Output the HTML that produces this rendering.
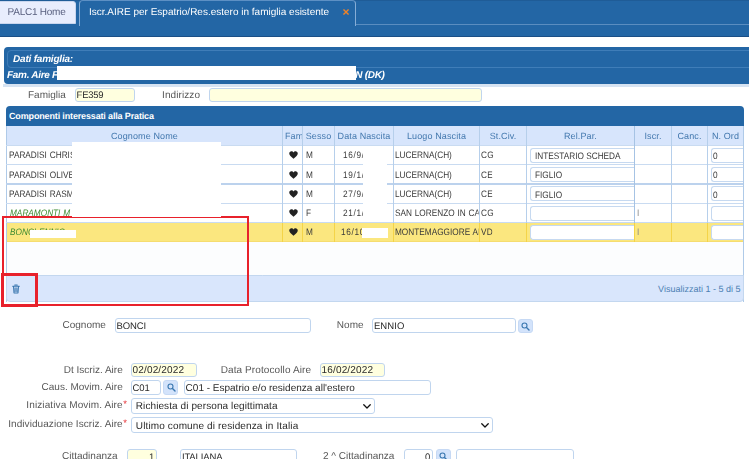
<!DOCTYPE html>
<html lang="it">
<head>
<meta charset="utf-8">
<title>Iscr.AIRE per Espatrio/Res.estero in famiglia esistente</title>
<style>
*{box-sizing:border-box;margin:0;padding:0}
html,body{width:749px;height:459px;overflow:hidden;background:#fff}
body{position:relative;font-family:"Liberation Sans",sans-serif;font-size:10px;color:#333;line-height:1;text-rendering:geometricPrecision}
.a{position:absolute;white-space:nowrap}
.blue{background:#2366a5}
.t{position:absolute;white-space:nowrap;line-height:12px;height:12px}
.lbl{color:#575757;font-size:10px}
.inp{position:absolute;border:1px solid #c0d5ee;border-radius:3px;background:#fff;font-size:9.5px;color:#2a2a2a;line-height:15.5px;padding-left:0.6px;overflow:hidden;white-space:nowrap}
.y{background:#ffffdf}
.btn{position:absolute;background:#d3e3fb;border:1px solid #c6d9f4;border-radius:3px}
.vl{position:absolute;width:1px;background:#b6cfeb;top:126px;height:116px}
.hl{position:absolute;height:1px;background:#c9dbf1;left:6px;width:737px}
.cell{position:absolute;white-space:nowrap;font-size:9.4px;letter-spacing:0;word-spacing:0.6px;color:#3a3a3a;line-height:12px;overflow:hidden;transform:scaleX(0.88);transform-origin:0 0}
.ri{position:absolute;left:4px;top:0;white-space:nowrap;font-size:9.4px;color:#3a3a3a;line-height:12px;transform:scaleX(0.88);transform-origin:0 0}
.hd{position:absolute;white-space:nowrap;font-size:9px;letter-spacing:0.12px;color:#4378ae;line-height:12px;text-align:center;overflow:hidden}
.grn{color:#3f8c32;font-style:italic}
.w{position:absolute;background:#fff}
.ast{position:absolute;color:#e62e33;font-size:9.5px;line-height:12px}
svg{position:absolute;overflow:visible}
</style>
</head>
<body>
<div id="page" style="position:absolute;left:0;top:0;width:749px;height:459px;filter:blur(0.5px)">
<div class="a blue" style="left:-10px;top:-10px;width:779px;height:47px"></div>
<div class="a" style="left:-10px;top:-10px;width:779px;height:11px;background:#1f5c97"></div>
<div class="a" style="left:355px;top:24px;width:410px;height:1px;background:#5a8dc0"></div>
<div class="a" style="left:-12px;top:1px;width:88px;height:23px;background:#e8edfd;border:1px solid #c9d6ee;border-radius:3px 3px 0 0"></div>
<div class="t" id="tab1" style="left:7.6px;top:7px;font-size:10px;letter-spacing:-0.25px;color:#5a6180">PALC1 Home</div>
<div class="a" style="left:78.5px;top:0px;width:277px;height:25.5px;background:#2366a5;border:1px solid #86add6;border-top-color:#5d90c4;border-bottom:none;border-radius:4px 4px 0 0"></div>
<div class="t" id="tab2" style="left:89px;top:7px;font-size:10px;color:#fff">Iscr.AIRE per Espatrio/Res.estero in famiglia esistente</div>
<div class="t" id="tabx" style="left:342.4px;top:6px;font-size:12px;font-weight:bold;color:#f08326">×</div>
<div class="a" style="left:-10px;top:36px;width:779px;height:1.3px;background:#1b4f86"></div>
<div class="a blue" style="left:4px;top:47px;width:760px;height:37px;border-radius:4px 0 0 4px"></div>
<div class="a" style="left:7px;top:50px;width:760px;height:18px;border:1px solid #3f7db8;border-radius:4px"></div>
<div class="t" id="dati" style="left:13px;top:53.5px;font-size:10px;letter-spacing:-0.2px;font-weight:bold;font-style:italic;color:#fff">Dati famiglia:</div>
<div class="t" id="fam" style="left:7px;top:70px;font-size:10px;letter-spacing:-0.3px;font-weight:bold;font-style:italic;color:#fff">Fam. Aire F</div>
<div class="t" id="dk" style="left:355.3px;top:70px;font-size:10px;letter-spacing:-0.3px;font-weight:bold;font-style:italic;color:#fff">N (DK)</div>
<div class="w" style="left:57px;top:66px;width:299px;height:14px"></div>
<div class="a" style="left:3px;top:84.3px;width:760px;height:2.4px;background:#d6e3f2"></div>
<div class="t lbl" id="lfam" style="left:28px;top:89.5px">Famiglia</div>
<div class="inp y" id="ifam" style="left:75px;top:87.6px;width:60px;height:14.3px;letter-spacing:-0.26px;line-height:14.5px">FE359</div>
<div class="t lbl" id="lind" style="left:162px;top:89.5px;letter-spacing:0.1px">Indirizzo</div>
<div class="inp y" style="left:209px;top:87.6px;width:273px;height:14.3px"></div>
<div class="a blue" style="left:6px;top:106px;width:737.5px;height:21px;border-radius:4px 4px 0 0"></div>
<div class="t" id="comp" style="left:9px;top:110px;font-size:9px;letter-spacing:-0.15px;font-weight:bold;color:#fff">Componenti interessati alla Pratica</div>
<div class="a" style="left:6px;top:126px;width:737.5px;height:20px;background:#d7e5fc"></div>
<div class="a" style="left:6px;top:126px;width:1px;height:176px;background:#afcae8"></div>
<div class="a" style="left:742.5px;top:126px;width:1px;height:176px;background:#afcae8"></div>
<div class="a" style="left:7px;top:222.7px;width:735.5px;height:19.3px;background:#fbe77f;border-bottom:1px solid #f6dd70"></div>
<div class="a" style="left:7px;top:242px;width:735.5px;height:34px;background:#fcfdfe"></div>
<div class="hl" style="top:145px;"></div>
<div class="hl" style="top:164px;"></div>
<div class="hl" style="top:183.3px;height:1.3px;background:#bcd2ed"></div>
<div class="hl" style="top:203px;"></div>
<div class="hl" style="top:222px;"></div>
<div class="vl" style="left:282.2px;"></div>
<div class="a" style="left:282.2px;top:223px;width:1px;height:18.5px;background:#f4d448"></div>
<div class="vl" style="left:302.2px;"></div>
<div class="a" style="left:302.2px;top:223px;width:1px;height:18.5px;background:#f4d448"></div>
<div class="vl" style="left:334px;"></div>
<div class="a" style="left:334px;top:223px;width:1px;height:18.5px;background:#f4d448"></div>
<div class="vl" style="left:393px;"></div>
<div class="a" style="left:393px;top:223px;width:1px;height:18.5px;background:#f4d448"></div>
<div class="vl" style="left:478.6px;"></div>
<div class="a" style="left:478.6px;top:223px;width:1px;height:18.5px;background:#f4d448"></div>
<div class="vl" style="left:526px;"></div>
<div class="a" style="left:526px;top:223px;width:1px;height:18.5px;background:#f4d448"></div>
<div class="vl" style="left:634px;width:1.4px;background:#a6c3e4"></div>
<div class="a" style="left:634px;top:223px;width:1px;height:18.5px;background:#f4d448"></div>
<div class="vl" style="left:671px;"></div>
<div class="a" style="left:671px;top:223px;width:1px;height:18.5px;background:#f4d448"></div>
<div class="vl" style="left:707px;"></div>
<div class="a" style="left:707px;top:223px;width:1px;height:18.5px;background:#f4d448"></div>
<div class="hd" id="h1" style="left:7px;top:130px;width:275px;">Cognome Nome</div>
<div class="hd" id="h2" style="left:283px;top:130px;width:19px;text-align:left;padding-left:2px;">Fam</div>
<div class="hd" id="h3" style="left:303px;top:130px;width:31px;">Sesso</div>
<div class="hd" id="h4" style="left:335px;top:130px;width:58px;">Data Nascita</div>
<div class="hd" id="h5" style="left:394px;top:130px;width:85px;">Luogo Nascita</div>
<div class="hd" id="h6" style="left:480px;top:130px;width:46px;">St.Civ.</div>
<div class="hd" id="h7" style="left:527px;top:130px;width:107px;">Rel.Par.</div>
<div class="hd" id="h8" style="left:635px;top:130px;width:36px;">Iscr.</div>
<div class="hd" id="h9" style="left:672px;top:130px;width:35px;">Canc.</div>
<div class="hd" id="h10" style="left:708px;top:130px;width:35px;">N. Ord</div>
<div class="cell" id="n1" style="left:8.6px;top:149px;width:310.682px">PARADISI CHRIS</div>
<svg style="left:289px;top:150.7px" width="9" height="8" viewBox="0 0 18 16"><path d="M9 15.5 C4 11.5 0.5 8.6 0.5 5 C0.5 2.4 2.5 0.5 4.9 0.5 C6.6 0.5 8.2 1.5 9 3 C9.8 1.5 11.4 0.5 13.1 0.5 C15.5 0.5 17.5 2.4 17.5 5 C17.5 8.6 14 11.5 9 15.5 Z" fill="#222"/></svg>
<div class="cell" id="s1" style="left:306px;top:149px">M</div>
<div class="cell" id="d1" style="left:343.3px;top:149px;width:56.4773px;letter-spacing:0.75px">16/9/</div>
<div class="cell" id="l1" style="left:395.3px;top:149px;width:94.6591px">LUCERNA(CH)</div>
<div class="cell" id="c1" style="left:481px;top:149px;letter-spacing:0.2px">CG</div>
<div class="inp" id="r1" style="left:530px;top:148px;width:104px;height:15px;padding:0;border-color:#c6d9f0;border-radius:3px 0 0 3px;border-right:none"><span class="ri" style="top:0.5px">INTESTARIO SCHEDA</span></div>
<div class="inp" id="o1" style="left:711px;top:148px;width:32px;height:15px;padding:0;border-color:#c6d9f0;border-radius:3px 0 0 3px;border-right:none"><span class="ri" style="left:1px;top:0.5px">0</span></div>
<div class="cell" id="n2" style="left:8.6px;top:168.8px;width:310.682px">PARADISI OLIVE</div>
<svg style="left:289px;top:170.5px" width="9" height="8" viewBox="0 0 18 16"><path d="M9 15.5 C4 11.5 0.5 8.6 0.5 5 C0.5 2.4 2.5 0.5 4.9 0.5 C6.6 0.5 8.2 1.5 9 3 C9.8 1.5 11.4 0.5 13.1 0.5 C15.5 0.5 17.5 2.4 17.5 5 C17.5 8.6 14 11.5 9 15.5 Z" fill="#222"/></svg>
<div class="cell" id="s2" style="left:306px;top:168.8px">M</div>
<div class="cell" id="d2" style="left:343.3px;top:168.8px;width:56.4773px;letter-spacing:0.75px">19/1/</div>
<div class="cell" id="l2" style="left:395.3px;top:168.8px;width:94.6591px">LUCERNA(CH)</div>
<div class="cell" id="c2" style="left:481px;top:168.8px;letter-spacing:0.2px">CE</div>
<div class="inp" id="r2" style="left:530px;top:167px;width:104px;height:15px;padding:0;border-color:#c6d9f0;border-radius:3px 0 0 3px;border-right:none"><span class="ri" style="top:1.3px">FIGLIO</span></div>
<div class="inp" id="o2" style="left:711px;top:167px;width:32px;height:15px;padding:0;border-color:#c6d9f0;border-radius:3px 0 0 3px;border-right:none"><span class="ri" style="left:1px;top:1.3px">0</span></div>
<div class="cell" id="n3" style="left:8.6px;top:188.1px;width:310.682px">PARADISI RASM</div>
<svg style="left:289px;top:189.8px" width="9" height="8" viewBox="0 0 18 16"><path d="M9 15.5 C4 11.5 0.5 8.6 0.5 5 C0.5 2.4 2.5 0.5 4.9 0.5 C6.6 0.5 8.2 1.5 9 3 C9.8 1.5 11.4 0.5 13.1 0.5 C15.5 0.5 17.5 2.4 17.5 5 C17.5 8.6 14 11.5 9 15.5 Z" fill="#222"/></svg>
<div class="cell" id="s3" style="left:306px;top:188.1px">M</div>
<div class="cell" id="d3" style="left:343.3px;top:188.1px;width:56.4773px;letter-spacing:0.75px">27/9/</div>
<div class="cell" id="l3" style="left:395.3px;top:188.1px;width:94.6591px">LUCERNA(CH)</div>
<div class="cell" id="c3" style="left:481px;top:188.1px;letter-spacing:0.2px">CE</div>
<div class="inp" id="r3" style="left:530px;top:186px;width:104px;height:15px;padding:0;border-color:#c6d9f0;border-radius:3px 0 0 3px;border-right:none"><span class="ri" style="top:1.6px">FIGLIO</span></div>
<div class="inp" id="o3" style="left:711px;top:186px;width:32px;height:15px;padding:0;border-color:#c6d9f0;border-radius:3px 0 0 3px;border-right:none"><span class="ri" style="left:1px;top:1.6px">0</span></div>
<div class="cell grn" id="n4" style="left:9.6px;top:206.8px;width:309.545px">MARAMONTI M</div>
<svg style="left:289px;top:208.5px" width="9" height="8" viewBox="0 0 18 16"><path d="M9 15.5 C4 11.5 0.5 8.6 0.5 5 C0.5 2.4 2.5 0.5 4.9 0.5 C6.6 0.5 8.2 1.5 9 3 C9.8 1.5 11.4 0.5 13.1 0.5 C15.5 0.5 17.5 2.4 17.5 5 C17.5 8.6 14 11.5 9 15.5 Z" fill="#222"/></svg>
<div class="cell" id="s4" style="left:306px;top:206.8px">F</div>
<div class="cell" id="d4" style="left:343.3px;top:206.8px;width:56.4773px;letter-spacing:0.75px">21/1/</div>
<div class="cell" id="l4" style="left:395.3px;top:206.8px;width:94.6591px">SAN LORENZO IN CAMPO</div>
<div class="cell" id="c4" style="left:481px;top:206.8px;letter-spacing:0.2px">CG</div>
<div class="inp" id="r4" style="left:530px;top:206px;width:104px;height:15px;padding:0;border-color:#c6d9f0;border-radius:3px 0 0 3px;border-right:none"><span class="ri" style="top:0.3px"></span></div>
<div class="cell" id="i4" style="left:636.5px;top:207px;color:#888">I</div>
<div class="inp" id="o4" style="left:711px;top:206px;width:32px;height:15px;padding:0;border-color:#c6d9f0;border-radius:3px 0 0 3px;border-right:none"><span class="ri" style="left:1px;top:0.3px"></span></div>
<div class="cell grn" id="n5" style="left:9.6px;top:226.2px;width:309.545px">BONCI ENNIO</div>
<svg style="left:289px;top:227.9px" width="9" height="8" viewBox="0 0 18 16"><path d="M9 15.5 C4 11.5 0.5 8.6 0.5 5 C0.5 2.4 2.5 0.5 4.9 0.5 C6.6 0.5 8.2 1.5 9 3 C9.8 1.5 11.4 0.5 13.1 0.5 C15.5 0.5 17.5 2.4 17.5 5 C17.5 8.6 14 11.5 9 15.5 Z" fill="#222"/></svg>
<div class="cell" id="s5" style="left:306px;top:226.2px">M</div>
<div class="cell" id="d5" style="left:340.7px;top:226.2px;width:59.4318px;letter-spacing:0.75px">16/10</div>
<div class="cell" id="l5" style="left:395.3px;top:226.2px;width:94.6591px">MONTEMAGGIORE AL METAURO</div>
<div class="cell" id="c5" style="left:481px;top:226.2px;letter-spacing:0.2px">VD</div>
<div class="inp" id="r5" style="left:530px;top:225px;width:104px;height:15px;padding:0;border-color:#c6d9f0;border-radius:3px 0 0 3px;border-right:none"><span class="ri" style="top:0.7px"></span></div>
<div class="cell" id="i5" style="left:636.5px;top:226.4px;color:#888">I</div>
<div class="inp" id="o5" style="left:711px;top:225px;width:32px;height:15px;padding:0;border-color:#c6d9f0;border-radius:3px 0 0 3px;border-right:none"><span class="ri" style="left:1px;top:0.7px"></span></div>
<div class="w" style="left:362.7px;top:150px;width:24.3px;height:67px"></div>
<div class="w" style="left:30px;top:230px;width:46px;height:7.7px"></div>
<div class="w" style="left:362px;top:228px;width:26px;height:10px"></div>
<div class="a" style="left:6px;top:275px;width:737.5px;height:27px;background:#d9e6fc;border:1px solid #c3d7ef;border-radius:0 0 4px 4px"></div>
<svg style="left:12px;top:284px" width="8" height="10" viewBox="0 0 10 12"><path d="M0.8 2.6h8.4M3.4 1h3.2M1.9 3l.6 8h5l.6-8M3.9 4.6v4.6M6.1 4.6v4.6" fill="none" stroke="#3b78b0" stroke-width="1.3" stroke-linecap="round" stroke-linejoin="round"/></svg>
<div class="t" id="vis" style="right:8.5px;top:283px;font-size:9px;color:#4b7fb3">Visualizzati 1 - 5 di 5</div>
<div class="a" style="left:2px;top:216px;width:247px;height:90px;border:2px solid #e8212b"></div>
<div class="a" style="left:1.3px;top:272.5px;width:36.3px;height:34.3px;border:3px solid #e8212b"></div>
<div class="w" style="left:71.7px;top:141.7px;width:149.8px;height:75.3px"></div>
<div class="t lbl" id="lcog" style="left:62.5px;top:319.5px;letter-spacing:0px">Cognome</div>
<div class="inp" id="icog" style="left:115px;top:318px;width:196px;height:15.3px;letter-spacing:-0.12px">BONCI</div>
<div class="t lbl" id="lnom" style="left:336.7px;top:319.5px;letter-spacing:0.1px">Nome</div>
<div class="inp" id="inom" style="left:372.3px;top:318px;width:144px;height:15.3px;letter-spacing:0.12px">ENNIO</div>
<div class="btn" style="left:518px;top:318.7px;width:15.3px;height:14.3px"></div>
<svg style="left:521.2px;top:321.5px" width="9" height="9" viewBox="0 0 18 18"><circle cx="7" cy="7" r="5" fill="none" stroke="#3b78b0" stroke-width="2.2"/><path d="M11 11 L16 16" stroke="#3b78b0" stroke-width="2.8" stroke-linecap="round"/></svg>
<div class="t lbl" id="ldt" style="right:626.3px;top:364.8px;letter-spacing:0px">Dt Iscriz. Aire</div>
<div class="inp y" id="idt" style="left:131px;top:363px;width:66px;height:14px;line-height:13.6px;font-size:10px;letter-spacing:0.15px">02/02/2022</div>
<div class="t lbl" id="ldp" style="left:220.7px;top:364.8px;letter-spacing:0.1px">Data Protocollo Aire</div>
<div class="inp y" id="idp" style="left:320px;top:363px;width:65px;height:14px;line-height:13.6px;font-size:10px;letter-spacing:0.15px">16/02/2022</div>
<div class="t lbl" id="lcm" style="right:626.3px;top:382.2px;letter-spacing:0px">Caus. Movim. Aire</div>
<div class="inp" id="icm" style="left:131px;top:380.3px;width:30px;height:14.5px;letter-spacing:-0.15px;line-height:16.5px">C01</div>
<div class="btn" style="left:163.3px;top:380.3px;width:15px;height:14.5px"></div>
<svg style="left:166.5px;top:383.1px" width="9" height="9" viewBox="0 0 18 18"><circle cx="7" cy="7" r="5" fill="none" stroke="#3b78b0" stroke-width="2.2"/><path d="M11 11 L16 16" stroke="#3b78b0" stroke-width="2.8" stroke-linecap="round"/></svg>
<div class="inp" id="icd" style="left:184px;top:380.3px;width:247px;height:14.5px;font-size:10px;line-height:15px">C01 - Espatrio e/o residenza all'estero</div>
<div class="t lbl" id="lin" style="right:626.3px;top:400.2px;letter-spacing:0.11px">Iniziativa Movim. Aire</div>
<div class="ast" style="left:123.3px;top:398.5px">*</div>
<div class="inp" id="iin" style="left:131px;top:398px;width:244.3px;height:16px;padding-left:3.8px;line-height:16.4px;font-size:10px;letter-spacing:0.09px">Richiesta di persona legittimata</div>
<svg style="left:362.5px;top:404px" width="8" height="5" viewBox="0 0 16 10"><path d="M1.5 1.5 L8 8 L14.5 1.5" fill="none" stroke="#111" stroke-width="2.6" stroke-linecap="round" stroke-linejoin="round"/></svg>
<div class="t lbl" id="lid" style="right:626.3px;top:418.5px;letter-spacing:0.06px">Individuazione Iscriz. Aire</div>
<div class="ast" style="left:123.3px;top:417.5px">*</div>
<div class="inp" id="iid" style="left:131px;top:417px;width:362px;height:16px;padding-left:3.8px;line-height:17px;font-size:10px;letter-spacing:0.13px">Ultimo comune di residenza in Italia</div>
<svg style="left:480.7px;top:423px" width="8" height="5" viewBox="0 0 16 10"><path d="M1.5 1.5 L8 8 L14.5 1.5" fill="none" stroke="#111" stroke-width="2.6" stroke-linecap="round" stroke-linejoin="round"/></svg>
<div class="t lbl" id="lci" style="left:62px;top:450.5px;letter-spacing:0px">Cittadinanza</div>
<div class="inp y" id="ici" style="left:127.3px;top:449.3px;width:29.5px;height:15px;text-align:right;padding-right:1.6px;line-height:16.5px">1</div>
<div class="inp" id="iit" style="left:180.3px;top:449.3px;width:116.5px;height:15px;letter-spacing:-0.13px">ITALIANA</div>
<div class="t lbl" id="lc2" style="left:323px;top:450.5px;letter-spacing:0px">2 ^ Cittadinanza</div>
<div class="inp" id="ic2" style="left:404px;top:449.3px;width:29px;height:15px;text-align:right;padding-right:1.6px;line-height:16.5px">0</div>
<div class="btn" style="left:435.7px;top:449.3px;width:15px;height:15px"></div>
<svg style="left:438.9px;top:452.1px" width="9" height="9" viewBox="0 0 18 18"><circle cx="7" cy="7" r="5" fill="none" stroke="#3b78b0" stroke-width="2.2"/><path d="M11 11 L16 16" stroke="#3b78b0" stroke-width="2.8" stroke-linecap="round"/></svg>
<div class="inp" id="ie" style="left:456.3px;top:449.3px;width:117.5px;height:15px;"></div>
</div>
</body>
</html>
